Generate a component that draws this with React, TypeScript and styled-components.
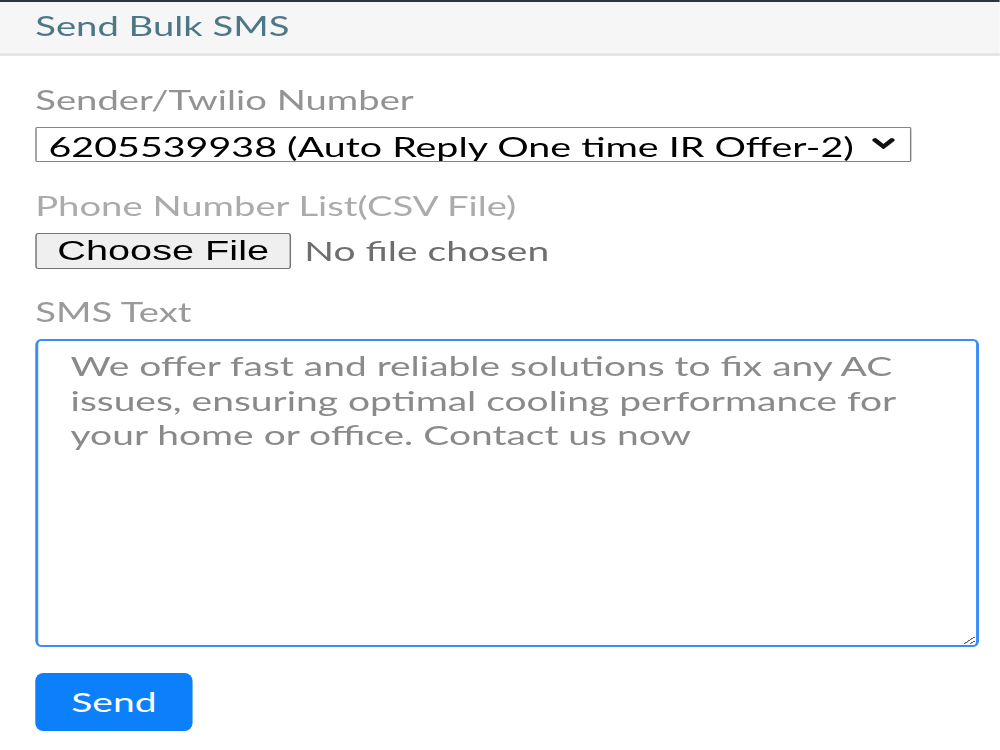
import React from "react";
import styled, { createGlobalStyle } from "styled-components";

// the reference is drawn wider than it is tall, so the whole card is stretched on x
const STRETCH = 1.47;

const GlobalStyle = createGlobalStyle`
  body {
    margin: 0;
    background: #ffffff;
    font-family: Lato, "Open Sans", sans-serif;
    overflow: hidden;
  }
`;

const Page = styled.div`
  width: calc(1000px / ${STRETCH});
  height: 750px;
  border-top: 2px solid #2c3441;
  box-sizing: border-box;
  transform: scaleX(${STRETCH});
  transform-origin: 0 0;
`;

const Header = styled.div`
  height: 54px;
  box-sizing: border-box;
  display: flex;
  align-items: center;
  padding: 0 0 4px 24px;
  background: #f6f6f6;
  border-bottom: 3px solid #e5e5e5;
`;

const Title = styled.h2`
  margin: 0;
  font-size: 26px;
  font-weight: 400;
  color: #4b7786;
`;

const Form = styled.form`
  padding: 29px 0 0 24px;
  display: flex;
  flex-direction: column;
  align-items: flex-start;
`;

const Label = styled.label<{ $tone: string }>`
  font-size: 26px;
  line-height: 30px;
  color: ${(p) => p.$tone};
  margin-bottom: 12px;
`;

const SelectWrap = styled.div`
  position: relative;
  width: 596px;
  margin-bottom: 29px;
`;

const Select = styled.select`
  appearance: none;
  display: block;
  width: 100%;
  height: 35px;
  box-sizing: border-box;
  padding: 5px 30px 0 8px;
  border: 1px solid #858585;
  border-radius: 1px / 2px;
  background: #fff;
  font-family: Lato, sans-serif;
  font-size: 26.8px;
  line-height: 28px;
  color: #000;
  outline: none;
`;

const Chevron = styled.svg`
  position: absolute;
  right: 11px;
  top: 11px;
  pointer-events: none;
`;

const FileRow = styled.div`
  display: flex;
  align-items: center;
  gap: 9px;
  margin-bottom: 28px;
`;

const FileButton = styled.button`
  width: 174px;
  height: 36px;
  border: 1px solid #767676;
  border-radius: 2px / 3px;
  background: #efefef;
  font-family: "Liberation Sans", Arial, sans-serif;
  font-size: 27px;
  color: #000;
  padding: 0;
`;

const FileName = styled.span`
  font-size: 26.5px;
  color: #6e6e6e;
`;

const TextArea = styled.textarea`
  width: 642px;
  height: 308px;
  box-sizing: border-box;
  border: 2px solid #3a8cf6;
  border-radius: 4px / 6px;
  padding: 8px 22px 0 22px;
  font-family: Lato, sans-serif;
  font-size: 26.5px;
  line-height: 34.5px;
  color: #888;
  outline: none;
  margin-bottom: 26px;

  &::placeholder {
    color: #8a8a8a;
  }
`;

const SendButton = styled.button`
  width: 107px;
  height: 58px;
  border: none;
  border-radius: 5.5px / 8px;
  background: #0c7ffb;
  color: #fff;
  font-family: Lato, sans-serif;
  font-size: 26.5px;
  padding: 0;
`;

export default function App() {
  return (
    <Page>
      <GlobalStyle />
      <Header>
        <Title>Send Bulk SMS</Title>
      </Header>
      <Form onSubmit={(e) => e.preventDefault()}>
        <Label $tone="#939393">Sender/Twilio Number</Label>
        <SelectWrap>
          <Select defaultValue="6205539938">
            <option value="6205539938">6205539938 (Auto Reply One time IR Offer-2)</option>
          </Select>
          <Chevron width="16" height="11" viewBox="0 0 16 11">
            <path d="M2.2 2 L8 8.6 L13.8 2" fill="none" stroke="#111" strokeWidth="3.6" strokeLinecap="round" strokeLinejoin="miter" />
          </Chevron>
        </SelectWrap>
        <Label $tone="#ababab">Phone Number List(CSV File)</Label>
        <FileRow>
          <FileButton type="button">Choose File</FileButton>
          <FileName>No file chosen</FileName>
        </FileRow>
        <Label $tone="#9a9a9a">SMS Text</Label>
        <TextArea placeholder="We offer fast and reliable solutions to fix any AC issues, ensuring optimal cooling performance for your home or office. Contact us now" />
        <SendButton type="submit">Send</SendButton>
      </Form>
    </Page>
  );
}
